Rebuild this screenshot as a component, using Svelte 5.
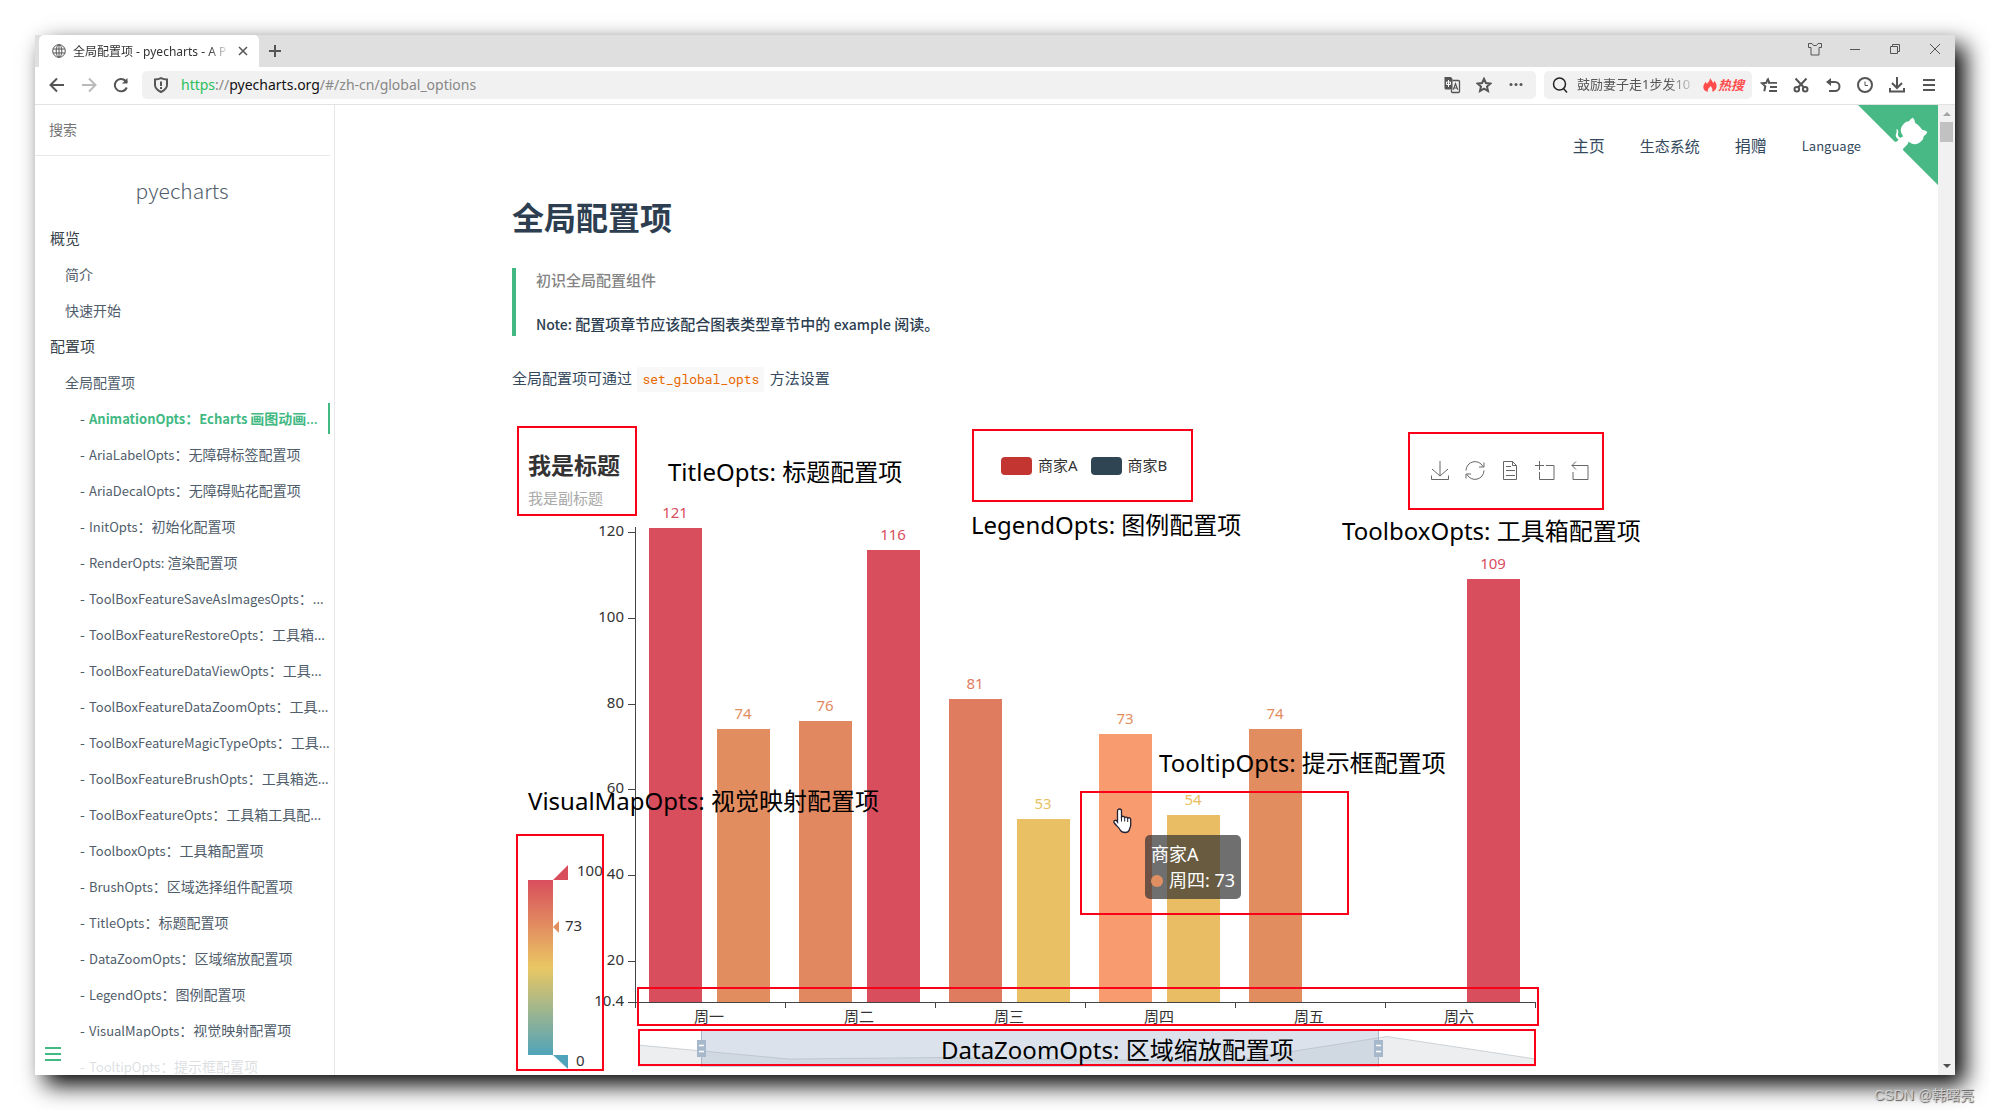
<script>
  const sections = [
    { label: '概览', level: 1 },
    { label: '简介', level: 2 },
    { label: '快速开始', level: 2 },
    { label: '配置项', level: 1 },
    { label: '全局配置项', level: 2 },
    { label: 'AnimationOpts：Echarts 画图动画配置项', level: 3, active: true },
    { label: 'AriaLabelOpts：无障碍标签配置项', level: 3 },
    { label: 'AriaDecalOpts：无障碍贴花配置项', level: 3 },
    { label: 'InitOpts：初始化配置项', level: 3 },
    { label: 'RenderOpts: 渲染配置项', level: 3 },
    { label: 'ToolBoxFeatureSaveAsImagesOpts：工具箱保存图片配置项', level: 3 },
    { label: 'ToolBoxFeatureRestoreOpts：工具箱还原配置项', level: 3 },
    { label: 'ToolBoxFeatureDataViewOpts：工具箱数据视图工具', level: 3 },
    { label: 'ToolBoxFeatureDataZoomOpts：工具箱区域缩放配置项', level: 3 },
    { label: 'ToolBoxFeatureMagicTypeOpts：工具箱动态类型切换配置项', level: 3 },
    { label: 'ToolBoxFeatureBrushOpts：工具箱选框组件配置项', level: 3 },
    { label: 'ToolBoxFeatureOpts：工具箱工具配置项', level: 3 },
    { label: 'ToolboxOpts：工具箱配置项', level: 3 },
    { label: 'BrushOpts：区域选择组件配置项', level: 3 },
    { label: 'TitleOpts：标题配置项', level: 3 },
    { label: 'DataZoomOpts：区域缩放配置项', level: 3 },
    { label: 'LegendOpts：图例配置项', level: 3 },
    { label: 'VisualMapOpts：视觉映射配置项', level: 3 },
    { label: 'TooltipOpts：提示框配置项', level: 3 }
  ];

  // Latin runs are set slightly smaller than the Chinese around them
  const runs = (s) => s.split(/([\x20-\x7e]+)/).filter(Boolean).map((t) => ({ t, en: t.charCodeAt(0) < 128 }));

  // Chart geometry
  const axisX = 123;
  const baseY = 582;
  const band = 150;
  const minValue = 10.4;
  const yOf = (v) => Math.round(baseY - (v - minValue) * 4.285);

  const low = [80, 163, 186];
  const mid = [234, 199, 99];
  const high = [217, 78, 93];
  function colorOf(v) {
    const t = Math.min(v, 100) / 50;
    const [a, b, k] = t < 1 ? [low, mid, t] : [mid, high, t - 1];
    return `rgb(${a.map((c, i) => Math.round(c + (b[i] - c) * k)).join(',')})`;
  }

  const days = ['周一', '周二', '周三', '周四', '周五', '周六'];
  const merchantA = [121, 76, 81, 73, 74, null];
  const merchantB = [74, 116, 53, 54, null, 109];
  const bars = days.flatMap((_, i) => [
    { x: axisX + band * i + 14, v: merchantA[i], hot: i === 3 },
    { x: axisX + band * i + 82, v: merchantB[i], hot: false }
  ]).filter((b) => b.v !== null);
  const ticks = [120, 100, 80, 60, 40, 20, 10.4];

  const frames = [
    { x: 6, y: 7, w: 118, h: 88 },
    { x: 461, y: 10, w: 219, h: 71 },
    { x: 897, y: 13, w: 194, h: 76 },
    { x: 569, y: 372, w: 267, h: 122 },
    { x: 5, y: 415, w: 86, h: 235 },
    { x: 126, y: 568, w: 900, h: 37 },
    { x: 127, y: 610, w: 896, h: 35 }
  ];
  const notes = [
    { x: 156, y: 61, t: 'TitleOpts: 标题配置项' },
    { x: 459, y: 114, t: 'LegendOpts: 图例配置项' },
    { x: 830, y: 120, t: 'ToolboxOpts: 工具箱配置项' },
    { x: 647, y: 352, t: 'TooltipOpts: 提示框配置项' },
    { x: 16, y: 390, t: 'VisualMapOpts: 视觉映射配置项' },
    { x: 429, y: 639, t: 'DataZoomOpts: 区域缩放配置项' }
  ];
</script>

<div class="desktop">
  <div class="window">
    <header class="tabs">
      <div class="tab">
        <svg width="14" height="14" viewBox="0 0 14 14" class="line thin"><circle cx="7" cy="7" r="6.3" /><ellipse cx="7" cy="7" rx="2.8" ry="6.3" /><path d="M7 .7v12.6M1 5h12M1 9h12" /></svg>
        <span class="tab-title">全局配置项 - pyecharts - A P</span>
        <button class="plain" aria-label="关闭标签"><svg width="10" height="10" viewBox="0 0 10 10" class="line"><path d="M1 1l8 8M9 1l-8 8" /></svg></button>
      </div>
      <button class="plain add" aria-label="新标签"><svg width="14" height="14" viewBox="0 0 14 14" class="line bold"><path d="M7 1v12M1 7h12" /></svg></button>
      <div class="controls">
        <button aria-label="皮肤"><svg width="16" height="14" viewBox="0 0 16 14" class="line thin"><path d="M5 1.5H1.5v4H4v7.5h8V5.500h2.500v-4H11L9.500 3.500h-3z" /></svg></button>
        <button aria-label="最小化"><svg width="12" height="12" viewBox="0 0 12 12" class="line thin"><path d="M1 6.500h10" /></svg></button>
        <button aria-label="还原"><svg width="12" height="12" viewBox="0 0 12 12" class="line thin"><path d="M1.500 3.500h7v7h-7zM3.500 3.500v-2h7v7h-2" /></svg></button>
        <button aria-label="关闭"><svg width="12" height="12" viewBox="0 0 12 12" class="line thin"><path d="M1 1l10 10M11 1L1 11" /></svg></button>
      </div>
    </header>

    <div class="toolbar">
      <button aria-label="后退"><svg width="16" height="16" viewBox="0 0 16 16" class="line bold"><path d="M15 8H2M8 1.500L1.500 8 8 14.500" /></svg></button>
      <button aria-label="前进" class="off"><svg width="16" height="16" viewBox="0 0 16 16" class="line bold"><path d="M1 8h13M8 1.500L14.500 8 8 14.500" /></svg></button>
      <button aria-label="刷新"><svg width="16" height="16" viewBox="0 0 16 16" class="line bold"><path d="M13.800 10.500A6.200 6.200 0 1 1 12.500 3.800L14 5.500" /><path d="M14.500 1v5.500H9z" class="solid" /></svg></button>
      <div class="address">
        <svg width="16" height="16" viewBox="0 0 16 16" class="line bold"><path d="M8 1.200c2 1 4 1.300 6 1.300V8c0 3.500-3 5.500-6 7-3-1.500-6-3.500-6-7V2.500c2 0 4-.3 6-1.300z" /><path d="M8 4.500v4.500M8 10v2" /></svg>
        <span class="url"><span class="secure">https</span>://<span class="host">pyecharts.org</span>/#/zh-cn/global_options</span>
        <button aria-label="翻译"><svg width="18" height="18" viewBox="0 0 18 18"><path d="M2 1h6l1.500 2v10.500H3A1.500 1.500 0 0 1 1.500 12V1.500z" fill="#555" /><path d="M3.500 6h4v2.500h-4zM5.500 4v7" stroke="#fff" fill="none" /><path d="M9.500 4.500h6a1 1 0 0 1 1 1v10a1 1 0 0 1-1 1h-6a1 1 0 0 1-1-1v-2" fill="none" stroke="#555" stroke-width="1.300" /><path d="M10.300 13.800l2.200-6 2.200 6M11 12h3" stroke="#555" stroke-width="1.200" fill="none" /></svg></button>
        <button aria-label="收藏"><svg width="16" height="16" viewBox="0 0 16 16" class="line bold"><path d="M8 1.800l1.900 4.200 4.500.5-3.400 3 1 4.500L8 11.700 4 14l1-4.500-3.400-3 4.500-.5z" /></svg></button>
        <button aria-label="更多"><svg width="16" height="16" viewBox="0 0 16 16" fill="#555"><circle cx="3" cy="7.500" r="1.500" /><circle cx="8" cy="7.500" r="1.500" /><circle cx="13" cy="7.500" r="1.500" /></svg></button>
      </div>
      <div class="finder">
        <svg width="16" height="16" viewBox="0 0 16 16" class="line dark"><circle cx="7.500" cy="7" r="6" /><path d="M11.500 11.500l3.500 4" /></svg>
        <input aria-label="搜索网页" placeholder="鼓励妻子走1步发10" />
        <a href="#hot" class="hot"><svg width="14" height="16" viewBox="0 0 14 16" fill="#ff4d4d"><path d="M7 1c1 2 2.700 3 3 5 .8-.3 1-1 1.200-2.300C13 5.500 14 7.500 13.500 10c-.4 2.500-2 4.200-4.300 4.800C10 12.500 9 10.500 7.500 9c-.3 1.200-1.300 1.500-2 2.500-.7 1-.8 2.200-.5 3.300C2 14.500.2 12.500.3 9.800.4 7.500 2 6.500 2.500 4.800c.8.500 1 1.200 1.200 2C5.500 5.500 7 3.500 7 1z" /></svg><span>热搜</span></a>
      </div>
      <button aria-label="收藏夹"><svg width="18" height="16" viewBox="0 0 18 16"><path d="M8 1.500L6.300 5.800 2 6.300l3.300 3-1 5" fill="none" stroke="#555" stroke-width="2" /><path d="M8 0l2.200 5H17v1.800H8z" fill="#555" /><path d="M10 10h7M9 14h8" stroke="#555" stroke-width="2" /></svg></button>
      <button aria-label="截图"><svg width="16" height="16" viewBox="0 0 16 16" class="line bold"><path d="M2.500 1.500l8.500 9M13.500 1.500L5 10.500" /><circle cx="3.800" cy="12.200" r="2.300" /><circle cx="12.200" cy="12.200" r="2.300" /></svg></button>
      <button aria-label="撤销"><svg width="16" height="16" viewBox="0 0 16 16" class="line bold"><path d="M3 5h7a4.300 4.300 0 0 1 0 9H4" /><path d="M1 5l5-4v8z" class="solid" /></svg></button>
      <button aria-label="历史"><svg width="16" height="16" viewBox="0 0 16 16" class="line bold"><circle cx="8" cy="8" r="7" /><path d="M8 4.500v4h3" class="thin" /></svg></button>
      <button aria-label="下载"><svg width="16" height="16" viewBox="0 0 16 16" class="line bold"><path d="M8 0v10.500M3 6l5 5 5-5M1 11v3.500h14V11" /></svg></button>
      <button aria-label="菜单"><svg width="16" height="16" viewBox="0 0 16 16" class="line bold"><path d="M2 3h12M2 8h12M2 13h12" /></svg></button>
    </div>

    <div class="page">
      <aside>
        <label class="search"><input type="search" aria-label="搜索" placeholder="搜索" /></label>
        <a href="#home" class="name">pyecharts</a>
        <nav>
          {#each sections as s}
            <div class="row l{s.level}" class:active={s.active}>
              {#if s.level === 1}<p>{s.label}</p>{:else}<a href="#section">{#each runs(s.label) as r}<span class="run" class:en={r.en}>{r.t}</span>{/each}</a>{/if}
            </div>
          {/each}
        </nav>
        <button class="toggle" aria-label="切换侧栏"><span></span><span></span><span></span></button>
      </aside>

      <main>
        <nav class="top">
          <a href="#home" class="big">主页</a>
          <a href="#eco">生态系统</a>
          <a href="#donate" class="big">捐赠</a>
          <a href="#language" class="en">Language</a>
        </nav>
        <a href="#github" class="corner" aria-label="GitHub">
          <svg width="80" height="80" viewBox="0 0 250 250">
            <path fill="#48b984" d="M0,0 L115,115 L130,115 L142,142 L250,250 L250,0 Z" />
            <path fill="#fff" d="M128.3,109.0 C113.8,99.7 119.0,89.6 119.0,89.6 C122.0,82.7 120.5,78.6 120.5,78.6 C119.2,72.0 123.4,76.3 123.4,76.3 C127.3,80.9 125.5,87.3 125.5,87.3 C122.9,97.6 130.6,101.9 134.4,103.2" />
            <path fill="#fff" d="M115.0,115.0 C114.9,115.1 118.7,116.5 119.8,115.4 L133.7,101.6 C136.9,99.2 139.9,98.4 142.2,98.6 C133.8,88.0 127.5,74.4 143.8,58.0 C148.5,53.4 154.0,51.2 159.7,51.0 C160.3,49.4 163.2,43.6 171.4,40.1 C171.4,40.1 176.1,42.5 178.8,56.2 C183.1,58.6 187.2,61.8 190.9,65.4 C194.5,69.0 197.7,73.2 200.1,77.6 C213.8,80.2 216.3,84.9 216.3,84.9 C212.7,93.1 206.9,96.0 205.4,96.6 C205.1,102.4 203.0,107.8 198.3,112.5 C181.9,128.9 168.3,122.5 157.7,114.1 C157.9,116.9 156.7,120.9 152.7,124.9 L141.0,136.5 C139.8,137.7 141.6,141.9 141.8,141.8 Z" />
          </svg>
        </a>

        <article>
          <h1>全局配置项</h1>
          <blockquote>
            <p class="lead">初识全局配置组件</p>
            <p><span class="latin">Note:</span> 配置项章节应该配合图表类型章节中的 <span class="latin">example</span> 阅读。</p>
          </blockquote>
          <p class="intro">全局配置项可通过 <code>set_global_opts</code> 方法设置</p>

          <div class="chart">
            <svg width="1140" height="655" viewBox="0 0 1140 655">
              <defs>
                <linearGradient id="ramp" x1="0" y1="0" x2="0" y2="1">
                  <stop offset="0" stop-color="#d94e5d" />
                  <stop offset=".5" stop-color="#eac763" />
                  <stop offset="1" stop-color="#50a3ba" />
                </linearGradient>
              </defs>

              <text x="16" y="54" class="title">我是标题</text>
              <text x="16" y="84" class="subtitle">我是副标题</text>

              {#each bars as b}
                <rect x={b.x} y={yOf(b.v)} width="53" height={baseY - yOf(b.v)} fill={b.hot ? '#f89b6e' : colorOf(b.v)} />
                <text x={b.x + 26} y={yOf(b.v) - 10} text-anchor="middle" fill={colorOf(b.v)}>{b.v}</text>
              {/each}

              <path class="axis" d="M{axisX}.5 107V{baseY}M{axisX - 7} {baseY}.500H1024" />
              {#each ticks as t}
                <path class="axis" d="M{axisX - 7} {yOf(t)}.500h7" />
                <text x={axisX - 11} y={yOf(t) + 4} text-anchor="end" class="label">{t}</text>
              {/each}
              {#each days as d, i}
                <path class="axis" d="M{axisX + band * i}.500 {baseY}v6" />
                <text x={axisX + band * i + 74} y="602" text-anchor="middle" class="label">{d}</text>
              {/each}
              <path class="axis" d="M1023.500 582v6" />

              <rect x="16" y="460" width="25" height="175" fill="url(#ramp)" />
              <path d="M41 460l15-15v15z" fill="#d94e5d" />
              <path d="M41 635h15v14z" fill="#50a3ba" />
              <path d="M41 507l6-6v12z" fill={colorOf(73)} />
              <text x="65" y="456" class="label">100</text>
              <text x="53" y="511" class="label">73</text>
              <text x="64" y="646" class="label">0</text>

              <path d="M126 625L277 639 426 637.500 576 640 725 640 875 616.500 1024 639V647H126z" fill="#2f4554" fill-opacity=".09" />
              <path d="M126 625L277 639 426 637.500 576 640 725 640 875 616.500 1024 639" fill="none" stroke="#2f4554" stroke-opacity=".2" />
              <rect x="189" y="609" width="678" height="38" fill="#a7b7cc" fill-opacity=".4" />
              {#each [189, 866] as h}
                <path d="M{h}.500 609v38" stroke="#a7b7cc" />
                <rect x={h - 4} y="620" width="9" height="17" fill="#a7b7cc" />
                <path d="M{h - 2} 625.500h5M{h - 2} 631.500h5" stroke="#fff" stroke-width="1.500" />
              {/each}

              {#each frames as f}
                <rect x={f.x} y={f.y} width={f.w} height={f.h} fill="none" stroke="#fb0019" stroke-width="2" />
              {/each}
              {#each notes as n}
                <text x={n.x} y={n.y} class="note">{n.t}</text>
              {/each}
            </svg>

            <div class="legend">
              <button><i class="a"></i><span>商家A</span></button>
              <button><i class="b"></i><span>商家B</span></button>
            </div>
            <div class="toolbox">
              <button aria-label="保存为图片"><svg width="20" height="22" viewBox="0 0 20 22"><path d="M10 1v15M2 9l8 7 8-7M1.500 15.500v4h17v-4" /></svg></button>
              <button aria-label="还原"><svg width="20" height="22" viewBox="0 0 20 22"><path d="M1 10.500A9 9 0 0 1 18 6.500M19 10.500A9 9 0 0 1 2 14.500M19 2.500v4.500h-5M1 18.500v-4.500h5" /></svg></button>
              <button aria-label="数据视图"><svg width="20" height="22" viewBox="0 0 20 22"><path d="M3.500 1.500h9l4 4v14h-13zM12.500 1.500v4h4M6 6.500h5M6 10.500h9M6 15.500h9" /></svg></button>
              <button aria-label="区域缩放"><svg width="20" height="22" viewBox="0 0 20 22"><path d="M4.500 1v9M0 5.500h9M11 5.500h8v14H4.500V12" /></svg></button>
              <button aria-label="区域缩放还原"><svg width="20" height="22" viewBox="0 0 20 22"><path d="M6 1.500L2 5.500l4 4M2 5.500h16v14h-15V12" /></svg></button>
            </div>
            <div class="tooltip">商家A<br /><i></i>周四: 73</div>
            <svg class="hand" width="20" height="26" viewBox="0 0 20 26"><path d="M5.500 14V3a2 2 0 0 1 4 0v6a1.800 1.800 0 0 1 3.200.6 1.800 1.800 0 0 1 3 .8 1.700 1.700 0 0 1 3 1.200V17c0 2-1.200 3.500-1.500 5-.5 1.700-1.500 2.500-4 2.500s-4-.5-5-2.500c-1-2.300-3.500-4-5.500-6.500-1-1.300-1.200-3 .2-3.200 1.100-.2 2 .7 2.600 1.700z" fill="#fff" stroke="#223" stroke-width="1.300" /><path d="M9.500 9v4.500M12.700 10v3.500M15.700 11v3" stroke="#223" fill="none" /></svg>
          </div>
        </article>
      </main>
      <div class="scrollbar"><i class="up"></i><i class="thumb"></i><i class="down"></i></div>
    </div>
  </div>
  <span class="watermark">CSDN @韩曙亮</span>
</div>

<style>
  :global(body) { margin: 0; background: #fff; }
  .desktop {
    position: relative;
    box-sizing: border-box;
    height: 100vh;
    padding: 35px;
    overflow: hidden;
    font-family: "Noto Sans", "Noto Sans CJK SC", sans-serif;
    --doc: "Noto Sans CJK SC", sans-serif;
    --green: #42b983;
  }
  .window {
    display: flex;
    flex-direction: column;
    height: 100%;
    background: #fff;
    box-shadow: 10px 10px 22px #000;
  }
  button {
    display: flex;
    align-items: center;
    justify-content: center;
    padding: 0;
    border: 0;
    background: none;
    font: inherit;
    color: inherit;
  }
  a { color: inherit; text-decoration: none; }
  p { margin: 0; }
  svg { display: block; flex: none; }
  .line { fill: none; stroke: #555; stroke-width: 1.5; }
  .line.thin, .thin { stroke-width: 1; }
  .line.bold { stroke-width: 2; }
  .line.dark { stroke: #222; }
  .line .solid { fill: #555; stroke: none; }
  .off { opacity: .4; }

  .tabs { display: flex; height: 32px; padding-left: 4px; background: #dfdfdf; }
  .tab {
    display: flex;
    align-items: center;
    box-sizing: border-box;
    width: 220px;
    padding: 0 11px 0 13px;
    border-radius: 5px 5px 0 0;
    background: #fff;
    font-size: 12px;
    color: #333;
  }
  .tab-title {
    flex: 1;
    margin: 0 9px 0 7px;
    overflow: hidden;
    white-space: nowrap;
    mask-image: linear-gradient(90deg, #000 136px, transparent 156px);
  }
  .add { width: 32px; }
  .controls { display: flex; margin-left: auto; padding-bottom: 4px; }
  .controls button { width: 40px; }

  .toolbar {
    display: flex;
    align-items: center;
    height: 36px;
    padding: 0 10px 1px 6px;
    border-bottom: 1px solid #e2e2e2;
  }
  .toolbar button { width: 32px; height: 28px; }
  .address, .finder {
    display: flex;
    align-items: center;
    box-sizing: border-box;
    height: 28px;
    border-radius: 5px;
    background: #f1f1f1;
  }
  .address { flex: 1; margin: 0 8px 0 5px; padding: 0 4px 0 11px; }
  .url { flex: 1; margin-left: 12px; padding-bottom: 1px; font-size: 14px; color: #888; }
  .secure { color: #2ac05c; }
  .host { color: #111; }
  .finder { width: 208px; padding-left: 8px; margin-right: 1px; }
  .finder input {
    width: 117px;
    margin: 0 9px;
    padding: 0 0 2px;
    border: 0;
    background: none;
    font: 13px "Noto Sans", "Noto Sans CJK SC", sans-serif;
    mask-image: linear-gradient(90deg, #000 90px, transparent 122px);
  }
  .finder input::placeholder { color: #555; }
  .hot { display: flex; align-items: center; gap: 1px; font-size: 13px; font-weight: 700; font-style: italic; color: #ff4d4d; white-space: nowrap; }
  .hot span { padding-bottom: 2px; }

  .page { display: flex; flex: 1; min-height: 0; font-family: var(--doc); }
  aside {
    position: relative;
    box-sizing: border-box;
    width: 300px;
    border-right: 1px solid #e8e8e8;
    overflow: hidden;
    flex: none;
  }
  .search { display: block; width: 295px; height: 50px; border-bottom: 1px solid #e8e8e8; }
  .search input {
    box-sizing: border-box;
    width: 100%;
    height: 50px;
    padding: 0 14px 2px;
    border: 0;
    background: none;
    font: 14px var(--doc);
  }
  .search input::placeholder { color: #757575; }
  .name { display: block; margin: 16px 5px 12px 0; line-height: 36px; text-align: center; font-size: 21px; font-weight: 300; color: #505d6b; }
  .row { display: flex; align-items: center; box-sizing: border-box; width: 295px; height: 36px; font-size: 14px; color: #505d6b; }
  .row a { overflow: hidden; text-overflow: ellipsis; white-space: nowrap; line-height: 30px; font-family: "Open Sans", sans-serif; }
  .run { font-family: var(--doc); }
  .en { font-size: 13px; }
  .latin { font-size: 14px; }
  .l1 { padding: 0 0 2px 15px; font-size: 15px; color: #364149; }
  .l2 { padding-left: 30px; }
  .l3 { padding-left: 45px; }
  .l3::before { content: "-"; width: 9px; flex: none; }
  .l3 a { flex: 1; }
  .active a { color: var(--green); font-weight: 600; box-shadow: inset -2px 0 var(--green); }
  .toggle {
    position: absolute;
    left: 0;
    bottom: 0;
    flex-direction: column;
    align-items: flex-start;
    justify-content: flex-start;
    gap: 4px;
    box-sizing: border-box;
    width: 284px;
    height: 38px;
    padding: 10px;
    background: rgba(255, 255, 255, .8);
  }
  .toggle span { width: 16px; height: 2px; background: var(--green); }

  main { position: relative; flex: 1; min-width: 0; overflow: hidden; color: #34495e; }
  .top { display: flex; align-items: center; justify-content: flex-end; gap: 35px; padding: 28px 77px 2px 0; height: 24px; font-size: 15px; }
  .top .big { font-size: 16px; }
  .top .en { font-size: 13px; }
  .corner { position: absolute; top: 0; right: 0; }
  article { padding: 0 0 0 177px; font-size: 15px; }
  h1 { margin: 33px 0 0; line-height: 48px; font-size: 32px; font-weight: 700; color: #2c3e50; }
  blockquote {
    display: flex;
    flex-direction: column;
    gap: 20px;
    height: 68px;
    margin: 28px 0 0;
    padding-left: 20px;
    border-left: 4px solid var(--green);
    font-weight: 500;
    line-height: 24px;
    color: #2c3e50;
  }
  blockquote .lead { color: #858585; }
  .intro { margin-top: 30px; line-height: 24px; }
  code { margin: 0 2px; padding: 3px 5px 4px; border-radius: 2px; background: #f8f8f8; font: 13px "Roboto Mono", "Liberation Mono", monospace; color: #e96900; }

  .chart { position: relative; margin-top: 30px; font-family: "Noto Sans", "Noto Sans CJK SC", sans-serif; }
  .chart text { font-size: 15px; }
  .chart .label { font-size: 15px; fill: #333; }
  .chart .title { font-size: 23px; font-weight: 700; fill: #333; }
  .chart .subtitle { font-size: 15px; fill: #aaa; }
  .chart .note { font-size: 24px; fill: #000; }
  .axis { fill: none; stroke: #444; }
  .legend { position: absolute; left: 489px; top: 36px; display: flex; gap: 13px; color: #333; }
  .legend button { gap: 6px; height: 20px; font-size: 15px; }
  .legend span { padding-bottom: 3px; }
  .legend i { width: 31px; height: 18px; border-radius: 4px; }
  .legend .a { background: #c23531; }
  .legend .b { background: #2f4554; }
  .toolbox { position: absolute; left: 918px; top: 40px; display: flex; gap: 15px; }
  .toolbox svg { fill: none; stroke: #666; }
  .tooltip {
    position: absolute;
    left: 633px;
    top: 415px;
    padding: 6px;
    border-radius: 5px;
    background: rgba(50, 50, 50, .7);
    font-size: 18px;
    line-height: 26px;
    white-space: nowrap;
    color: #fff;
  }
  .tooltip i { display: inline-block; width: 12px; height: 12px; margin-right: 6px; border-radius: 50%; background: #e08f62; }
  .hand { position: absolute; left: 600px; top: 388px; }

  .scrollbar { display: flex; flex-direction: column; align-items: center; width: 17px; background: #f1f1f1; }
  .up { margin: 7px 0 6px; border: 4px solid transparent; border-top: 0; border-bottom-color: #a3a3a3; }
  .thumb { width: 13px; height: 20px; background: #c1c1c1; }
  .down { margin: auto 0 7px; border: 4px solid transparent; border-bottom: 0; border-top-color: #505050; }
  .watermark {
    position: absolute;
    right: 16px;
    bottom: 6px;
    font: 14px "Liberation Sans", "Noto Sans CJK SC", sans-serif;
    color: #d0d0d0;
    text-shadow: 1px 1px 1px #555;
  }
</style>
